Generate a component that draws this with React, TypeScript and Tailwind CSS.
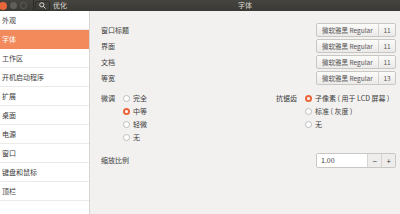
import React from "react";

const font = { fontFamily: '"Noto Sans CJK SC", "Noto Sans", sans-serif' };

const sections = ["外观", "字体", "工作区", "开机启动程序", "扩展", "桌面", "电源", "窗口", "键盘和鼠标", "顶栏"];

const fontRows = [
  { label: "窗口标题", size: "11" },
  { label: "界面", size: "11" },
  { label: "文档", size: "11" },
  { label: "等宽", size: "13" },
];

function Radio({ label, checked }: { label: string; checked?: boolean }) {
  return (
    <div className="flex h-[13px] items-center gap-[3px]">
      {checked ? (
        <span className="flex h-[7px] w-[7px] items-center justify-center rounded-full bg-[#e9663a]">
          <span className="h-[3px] w-[3px] rounded-full bg-white" />
        </span>
      ) : (
        <span className="h-[7px] w-[7px] rounded-full border border-[#bdbdbd] bg-white" />
      )}
      <span>{label}</span>
    </div>
  );
}

function FontButton({ size }: { size: string }) {
  return (
    <div className="flex h-[14px] w-[80px] items-center rounded-[2px] border border-[#c9c7c3] bg-gradient-to-b from-[#fbfbfa] to-[#eceae8] text-[6.5px] text-[#555]">
      <span className="flex-1 pl-[5px] whitespace-nowrap">微软雅黑 Regular</span>
      <span className="h-full border-l border-[#d6d4d0]" />
      <span className="w-[16px] text-center">{size}</span>
    </div>
  );
}

export default function App() {
  return (
    <div className="flex h-[214px] w-[400px] flex-col overflow-hidden bg-[#f2f1f0] text-[7px] leading-none text-[#3c3c3c]" style={font}>
      {/* header bar */}
      <div className="flex h-[11px] items-center bg-gradient-to-b from-[#45443f] to-[#3a3935] text-[#dfdbd2]">
        <div className="flex w-[90px] items-center">
          <span className="-ml-[1px] h-[8px] w-[8px] rounded-full bg-[#e9663a]" />
          <span className="ml-[3px] h-[7px] w-[7px] rounded-full bg-[#5f5e59]" />
          <span className="ml-[3px] h-[7px] w-[7px] rounded-full border border-[#5f5e59]" />
          <span className="ml-[6px] h-[11px] border-l border-[#2b2a27]" />
          <span className="ml-[1px] flex h-[10px] w-[15px] items-center justify-center rounded-[2px] border border-[#2e2d2a]">
            <svg width="7" height="7" viewBox="0 0 10 10" fill="none" stroke="#dfdbd2" strokeWidth="1.4">
              <circle cx="4" cy="4" r="3" />
              <path d="M6.3 6.3 9.3 9.3" />
            </svg>
          </span>
          <span className="ml-[3px]">优化</span>
        </div>
        <div className="flex-1 text-center">字体</div>
      </div>

      <div className="flex flex-1">
        {/* sidebar */}
        <div className="w-[90px] border-r border-[#d8d6d3] bg-white">
          {sections.map((s) => (
            <div
              key={s}
              className={
                s === "字体"
                  ? "flex h-[19px] items-center border-b border-[#f28a5b] bg-[#f28a5b] pl-[2px] text-white"
                  : "flex h-[19px] items-center border-b border-[#ebebea] pl-[2px]"
              }
            >
              {s}
            </div>
          ))}
        </div>

        {/* content */}
        <div className="flex-1 pl-[11px] pr-[4px] pt-[11px]">
          {fontRows.map((r) => (
            <div key={r.label} className="flex h-[16px] items-center justify-between">
              <span>{r.label}</span>
              <FontButton size={r.size} />
            </div>
          ))}

          <div className="mt-[6px] flex">
            <div className="flex w-[175px]">
              <span className="mt-[3px] w-[22px]">微调</span>
              <div>
                <Radio label="完全" />
                <Radio label="中等" checked />
                <Radio label="轻微" />
                <Radio label="无" />
              </div>
            </div>
            <div className="flex">
              <span className="mt-[3px] w-[29px]">抗锯齿</span>
              <div>
                <Radio label="子像素 ( 用于 LCD 屏幕 )" checked />
                <Radio label="标准 ( 灰度 )" />
                <Radio label="无" />
              </div>
            </div>
          </div>

          <div className="mt-[9px] flex h-[15px] items-center justify-between">
            <span>缩放比例</span>
            <div className="flex h-[15px] w-[80px] overflow-hidden rounded-[2px] border border-[#c9c7c3]">
              <span className="flex w-[51px] items-center bg-white pl-[4px]">1.00</span>
              <span className="flex w-[14px] items-center justify-center border-l border-[#d6d4d0] bg-[#eeedeb] text-[8px]">−</span>
              <span className="flex w-[14px] items-center justify-center border-l border-[#d6d4d0] bg-[#eeedeb] text-[8px]">+</span>
            </div>
          </div>
        </div>
      </div>
    </div>
  );
}
